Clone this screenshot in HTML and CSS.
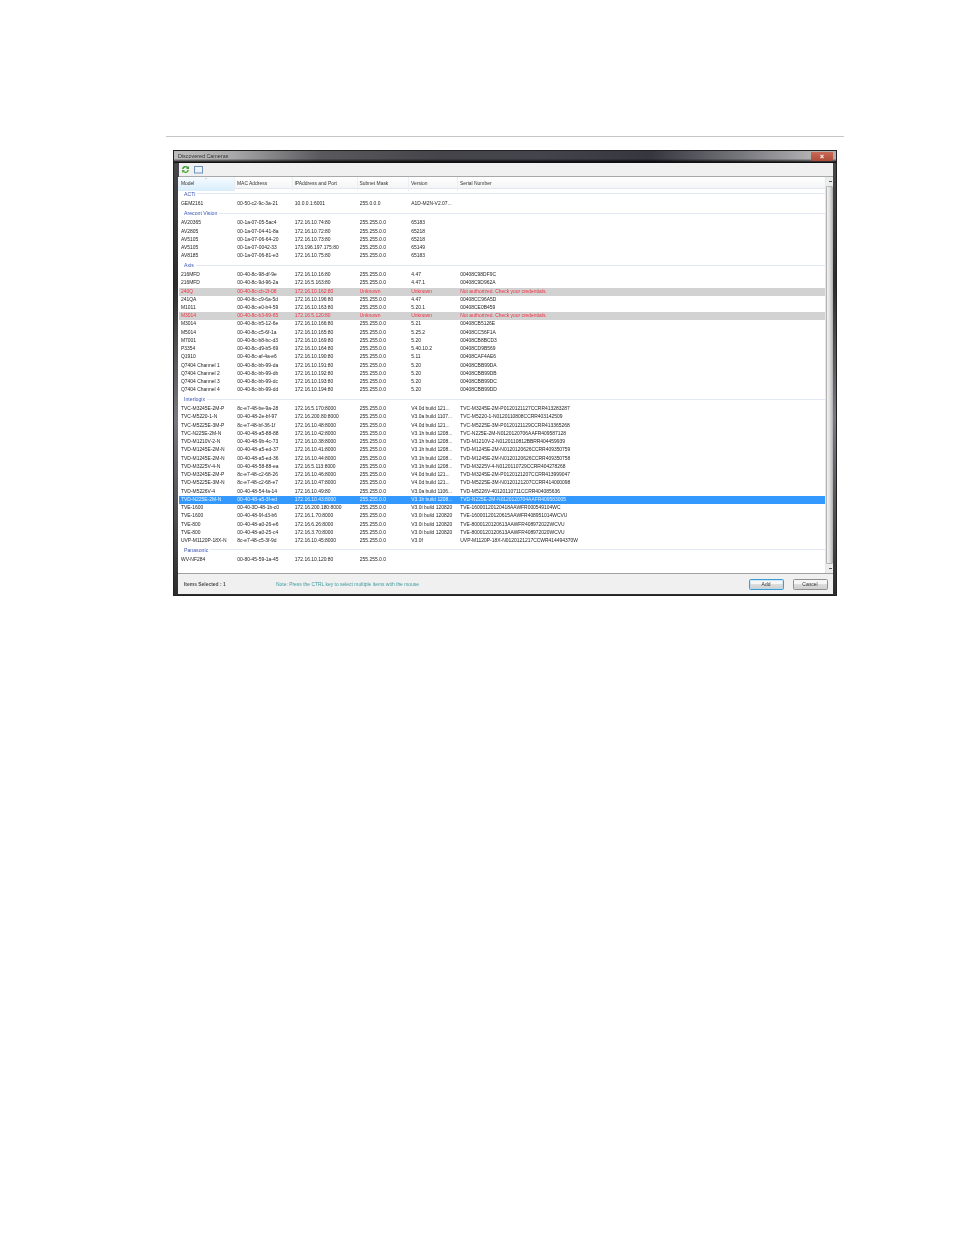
FILE: index.html
```html
<!DOCTYPE html>
<html lang="en">
<head>
<meta charset="utf-8">
<title>Discovered Cameras</title>
<link rel="stylesheet" href="styles.css">
</head>
<body>
<hr class="rule">
<div class="window">
  <div class="titlebar"><span class="title">Discovered Cameras</span><span class="close"><svg width="6" height="5" viewBox="0 0 6 5"><path d="M1.5 .8l3 3.4M4.5 .8l-3 3.4" stroke="#f4e8e4" stroke-width="1.1"/></svg></span></div>
  <div class="toolbar">
    <svg width="9" height="9" viewBox="0 0 9 9"><path d="M1 4a3.5 3.5 0 0 1 6-2l1-1v3H5l1-1a2 2 0 0 0-3.4 1z" fill="#3f9a3a"/><path d="M8 5a3.5 3.5 0 0 1-6 2L1 8V5h3L3 6a2 2 0 0 0 3.4-1z" fill="#5cae46"/></svg>
    <svg width="9" height="8" viewBox="0 0 9 8"><rect x=".5" y=".5" width="8" height="6.5" fill="#eef3f9" stroke="#6d93bd"/></svg>
  </div>
  <div class="content">
    <div class="listarea">
      <div class="list">
        <div class="row head"><span class="sorted">Model<i class="arrow"></i></span><span>MAC Address</span><span>IPAddress and Port</span><span>Subnet Mask</span><span>Version</span><span>Serial Number</span></div>
        <div class="group first"><span>ACTi</span></div>
        <div class="row"><span>GEM2161</span><span>00-50-c2-9c-3a-21</span><span>10.0.0.1:6001</span><span>255.0.0.0</span><span>A1D-M2N-V2.07...</span><span></span></div>
        <div class="group"><span>Arecont Vision</span></div>
        <div class="row"><span>AV20365</span><span>00-1a-07-05-5ac4</span><span>172.16.10.74:80</span><span>255.255.0.0</span><span>65183</span><span></span></div>
        <div class="row"><span>AV2805</span><span>00-1a-07-04-41-8a</span><span>172.16.10.72:80</span><span>255.255.0.0</span><span>65218</span><span></span></div>
        <div class="row"><span>AV5105</span><span>00-1a-07-06-64-20</span><span>172.16.10.73:80</span><span>255.255.0.0</span><span>65218</span><span></span></div>
        <div class="row"><span>AV5105</span><span>00-1a-07-0042-33</span><span>173.196.197.175:80</span><span>255.255.0.0</span><span>65149</span><span></span></div>
        <div class="row"><span>AV8185</span><span>00-1a-07-06-81-e3</span><span>172.16.10.75:80</span><span>255.255.0.0</span><span>65183</span><span></span></div>
        <div class="group"><span>Axis</span></div>
        <div class="row"><span>216MFD</span><span>00-40-8c-98-df-9e</span><span>172.16.10.16:80</span><span>255.255.0.0</span><span>4.47</span><span>00408C98DF9C</span></div>
        <div class="row"><span>216MFD</span><span>00-40-8c-9d-96-2a</span><span>172.16.5.163:80</span><span>255.255.0.0</span><span>4.47.1</span><span>00408C9D962A</span></div>
        <div class="row err"><span>240Q</span><span>00-40-8c-cb-2f-08</span><span>172.16.10.162:80</span><span>Unknown</span><span>Unknown</span><span>Not authorized. Check your credentials.</span></div>
        <div class="row"><span>241QA</span><span>00-40-8c-c9-6a-5d</span><span>172.16.10.196:80</span><span>255.255.0.0</span><span>4.47</span><span>00408CC96A5D</span></div>
        <div class="row"><span>M1011</span><span>00-40-8c-e0-b4-59</span><span>172.16.10.163:80</span><span>255.255.0.0</span><span>5.20.1</span><span>00408CE0B459</span></div>
        <div class="row err"><span>M3014</span><span>00-40-8c-b3-69-65</span><span>172.16.5.120:80</span><span>Unknown</span><span>Unknown</span><span>Not authorized. Check your credentials.</span></div>
        <div class="row"><span>M3014</span><span>00-40-8c-b5-12-6e</span><span>172.16.10.166:80</span><span>255.255.0.0</span><span>5.21</span><span>00408CB5126E</span></div>
        <div class="row"><span>M5014</span><span>00-40-8c-c5-6f-1a</span><span>172.16.10.165:80</span><span>255.255.0.0</span><span>5.25.2</span><span>00408CC56F1A</span></div>
        <div class="row"><span>M7001</span><span>00-40-8c-b8-bc-d3</span><span>172.16.10.169:80</span><span>255.255.0.0</span><span>5.20</span><span>00408CB8BCD3</span></div>
        <div class="row"><span>P3354</span><span>00-40-8c-d9-b5-69</span><span>172.16.10.164:80</span><span>255.255.0.0</span><span>5.40.10.2</span><span>00408CD9B569</span></div>
        <div class="row"><span>Q1910</span><span>00-40-8c-af-4a-e6</span><span>172.16.10.190:80</span><span>255.255.0.0</span><span>5.11</span><span>00408CAF4AE6</span></div>
        <div class="row"><span>Q7404 Channel 1</span><span>00-40-8c-bb-99-da</span><span>172.16.10.191:80</span><span>255.255.0.0</span><span>5.20</span><span>00408CBB99DA</span></div>
        <div class="row"><span>Q7404 Channel 2</span><span>00-40-8c-bb-99-db</span><span>172.16.10.192:80</span><span>255.255.0.0</span><span>5.20</span><span>00408CBB99DB</span></div>
        <div class="row"><span>Q7404 Channel 3</span><span>00-40-8c-bb-99-dc</span><span>172.16.10.193:80</span><span>255.255.0.0</span><span>5.20</span><span>00408CBB99DC</span></div>
        <div class="row"><span>Q7404 Channel 4</span><span>00-40-8c-bb-99-dd</span><span>172.16.10.194:80</span><span>255.255.0.0</span><span>5.20</span><span>00408CBB99DD</span></div>
        <div class="group"><span>Interlogix</span></div>
        <div class="row"><span>TVC-M3245E-2M-P</span><span>8c-e7-48-be-9a-28</span><span>172.16.5.170:8000</span><span>255.255.0.0</span><span>V4.0d build 121...</span><span>TVC-M3245E-2M-P0120121127CCRR413283287</span></div>
        <div class="row"><span>TVC-M5220-1-N</span><span>00-40-48-2e-bf-97</span><span>172.16.200.80:8000</span><span>255.255.0.0</span><span>V3.0a build 1107...</span><span>TVC-M5220-1-N0120110808CCRR403142509</span></div>
        <div class="row"><span>TVC-M5225E-3M-P</span><span>8c-e7-48-bf-36-1f</span><span>172.16.10.48:8000</span><span>255.255.0.0</span><span>V4.0d build 121...</span><span>TVC-M5225E-3M-P0120121129CCRR413365268</span></div>
        <div class="row"><span>TVC-N225E-2M-N</span><span>00-40-48-a5-88-88</span><span>172.16.10.42:8000</span><span>255.255.0.0</span><span>V3.1h build 1208...</span><span>TVC-N225E-2M-N0120120706AAFR409587128</span></div>
        <div class="row"><span>TVD-M1210V-2-N</span><span>00-40-48-9b-4c-73</span><span>172.16.10.38:8000</span><span>255.255.0.0</span><span>V3.1h build 1208...</span><span>TVD-M1210V-2-N0120110812BBRR404459939</span></div>
        <div class="row"><span>TVD-M1245E-2M-N</span><span>00-40-48-a5-ed-37</span><span>172.16.10.41:8000</span><span>255.255.0.0</span><span>V3.1h build 1208...</span><span>TVD-M1245E-2M-N0120120626CCRR409350759</span></div>
        <div class="row"><span>TVD-M1245E-2M-N</span><span>00-40-48-a5-ed-36</span><span>172.16.10.44:8000</span><span>255.255.0.0</span><span>V3.1h build 1208...</span><span>TVD-M1245E-2M-N0120120626CCRR409350758</span></div>
        <div class="row"><span>TVD-M3225V-4-N</span><span>00-40-48-58-88-ea</span><span>172.16.5.113:8000</span><span>255.255.0.0</span><span>V3.1h build 1208...</span><span>TVD-M3225V-4-N0120110729CCRR404278268</span></div>
        <div class="row"><span>TVD-M3245E-2M-P</span><span>8c-e7-48-c2-68-26</span><span>172.16.10.46:8000</span><span>255.255.0.0</span><span>V4.0d build 121...</span><span>TVD-M3245E-2M-P0120121207CCRR413999047</span></div>
        <div class="row"><span>TVD-M5225E-3M-N</span><span>8c-e7-48-c2-68-e7</span><span>172.16.10.47:8000</span><span>255.255.0.0</span><span>V4.0d build 121...</span><span>TVD-M5225E-3M-N0120121207CCRR414000098</span></div>
        <div class="row"><span>TVD-M5226V-4</span><span>00-40-48-54-fa-14</span><span>172.16.10.49:80</span><span>255.255.0.0</span><span>V3.0a build 1106...</span><span>TVD-M5226V-40120110711CCRR404085636</span></div>
        <div class="row sel"><span>TVD-N225E-2M-N</span><span>00-40-48-a5-3f-ed</span><span>172.16.10.43:8000</span><span>255.255.0.0</span><span>V3.1h build 1208...</span><span>TVD-N225E-2M-N0120120704AAFR409583005</span></div>
        <div class="row"><span>TVE-1600</span><span>00-40-3D-48-1b-c0</span><span>172.16.200.180:8000</span><span>255.255.0.0</span><span>V3.0i build 120820</span><span>TVE-16000120120418AAWFR000549104WC</span></div>
        <div class="row"><span>TVE-1600</span><span>00-40-48-9f-d3-b6</span><span>172.16.1.70:8000</span><span>255.255.0.0</span><span>V3.0i build 120820</span><span>TVE-16000120120615AAWFR408951014WCVU</span></div>
        <div class="row"><span>TVE-800</span><span>00-40-48-a0-26-e6</span><span>172.16.6.26:8000</span><span>255.255.0.0</span><span>V3.0i build 120820</span><span>TVE-8000120120613AAWFR408972022WCVU</span></div>
        <div class="row"><span>TVE-800</span><span>00-40-48-a0-25-c4</span><span>172.16.3.70:8000</span><span>255.255.0.0</span><span>V3.0i build 120820</span><span>TVE-8000120120613AAWFR408972020WCVU</span></div>
        <div class="row"><span>UVP-M1120P-18X-N</span><span>8c-e7-48-c5-3f-9d</span><span>172.16.10.45:8000</span><span>255.255.0.0</span><span>V3.0f</span><span>UVP-M1120P-18X-N0120121217CCWR414494370W</span></div>
        <div class="group"><span>Panasonic</span></div>
        <div class="row"><span>WV-NF284</span><span>00-80-45-59-1a-45</span><span>172.16.10.120:80</span><span>255.255.0.0</span><span></span><span></span></div>
      </div>
      <div class="scrollbar"><i class="up"></i><div class="thumb"></div><i class="down"></i></div>
    </div>
    <div class="footer">
      <span class="count">Items Selected : 1</span>
      <span class="note">Note: Press the CTRL key to select multiple items with the mouse</span>
      <span class="btn primary">Add</span>
      <span class="btn">Cancel</span>
    </div>
  </div>
</div>
</body>
</html>
```
FILE: styles.css
```css
* { box-sizing: border-box; }
html, body { margin: 0; background: #fff; }
body { height: 1235px; overflow: hidden; padding-top: 136px; font-family: "Liberation Sans", Arial, sans-serif; }
.rule { margin: 0 0 0 166px; width: 678px; height: 1px; border: 0; background: #c6c6c6; }
.window {
  margin: 13px 0 0 173px; width: 664px; height: 446px;
  display: flex; flex-direction: column;
  background: linear-gradient(#4a4a4f, #2c2c2e 30%, #777a80 60%, #2c2c2e);
  padding: 0 4px 1px 4px;
  border: 1px solid #222;
  border-bottom-width: 1.5px;
  filter: blur(.38px);
}
.titlebar {
  height: 12px; margin: 0 -4px; padding: 0 3px 2px 4px; flex: none;
  display: flex; align-items: center; justify-content: space-between;
  background: linear-gradient(transparent 70%, rgba(0,0,0,.85)), linear-gradient(90deg, #bdbdbd, #a8a8aa 9%, #5a5a5e 22%, #44444a 40%, #44444c 55%, #36363e 72%, #78787f 86%, #b0b0b2 96%);
  border-bottom: 1px solid #111;
}
.title { font-size: 5.4px; color: #1e1e1e; text-shadow: 0 0 1.5px #ddd; }
.close { width: 22px; height: 9px; margin-bottom: -2px; display: flex; align-items: center; justify-content: center; background: linear-gradient(#c96a58, #b04a38); border-radius: 0 0 2px 2px; }
.toolbar { height: 14px; flex: none; background: #f0f0f0; border-bottom: 1px solid #a8a8a8; display: flex; align-items: center; gap: 4px; padding-left: 2px; margin-left: .5px; margin-right: -.5px; }
.content { flex: 1; display: flex; flex-direction: column; min-height: 0; background: #f0f0f0; margin-right: -.5px; }
.listarea { height: 397px; flex: none; display: flex; background: #fff; border-bottom: 1px solid #a0a0a0; }
.list { width: 647px; flex: none; overflow: hidden; }
.row {
  display: grid; grid-template-columns: 56.3px 57.5px 65px 51.5px 49px 1fr;
  height: 8.24px; line-height: 8.24px; padding-left: 3px;
  font-size: 4.95px; color: #1c1c1c; white-space: nowrap;
}
.row > span { overflow: visible; }
.head { height: 12px; line-height: 14px; padding-left: 0; color: #333; background: linear-gradient(#fff, #f4f5f7); border-bottom: 1px solid #e2e6ee; grid-template-columns: 57px 57.5px 65px 51.5px 49px 1fr; }
.head > span { padding-left: 2px; border-right: 1px solid #eceef2; }
.head > span:last-child { border-right: 0; }
.head .sorted { padding-left: 3px; background: linear-gradient(#f6fbff, #d9edfb); position: relative; }
.arrow { position: absolute; left: 27px; top: 1px; width: 0; height: 0; border: 1.5px solid transparent; border-bottom-color: #9aa7bb; border-top: 0; }
.group { height: 10.65px; display: flex; align-items: flex-start; padding: .6px 0 0 6px; gap: 2px; font-size: 5.2px; line-height: 8px; color: #3a57b5; }
.group.first { height: 11.4px; }
.group::after { content: ""; flex: 1; height: 1px; margin-top: 3.5px; background: #e2e8f4; }
.err { background: #d2d2d2; color: #f0303f; margin-left: 1px; padding-left: 2px; }
.sel { background: #3399ff; color: #eef6ff; margin-left: 1px; padding-left: 2px; }
.scrollbar { flex: 1; display: flex; flex-direction: column; background: #eceded; border-left: 1px solid #e6e6e6; }
.up, .down { height: 9px; flex: none; position: relative; }
.up::after, .down::after { content: ""; position: absolute; left: 2.5px; top: 3.5px; width: 3px; height: 1.5px; background: #555; }
.thumb { flex: 1; background: linear-gradient(90deg, #f4f4f4, #dcdcdc 60%, #bdbdbd); border: 1px solid #b4b4b4; border-radius: 1px; }
.footer { flex: 1; display: flex; align-items: center; padding: 1px 5px 0 6px; font-size: 4.95px; }
.count { width: 92px; color: #303030; font-weight: bold; opacity: .85; }
.note { flex: 1; color: #3c9a9f; }
.btn { width: 35px; height: 11px; line-height: 10px; text-align: center; color: #333; border: 1px solid #8f8f8f; border-radius: 1.5px; background: linear-gradient(#f6f6f6 45%, #dcdcdc 50%, #cfcfcf); margin-left: 9px; }
.primary { border-color: #3c9ad4; box-shadow: inset 0 0 0 .5px #a8dcf5; }
```
